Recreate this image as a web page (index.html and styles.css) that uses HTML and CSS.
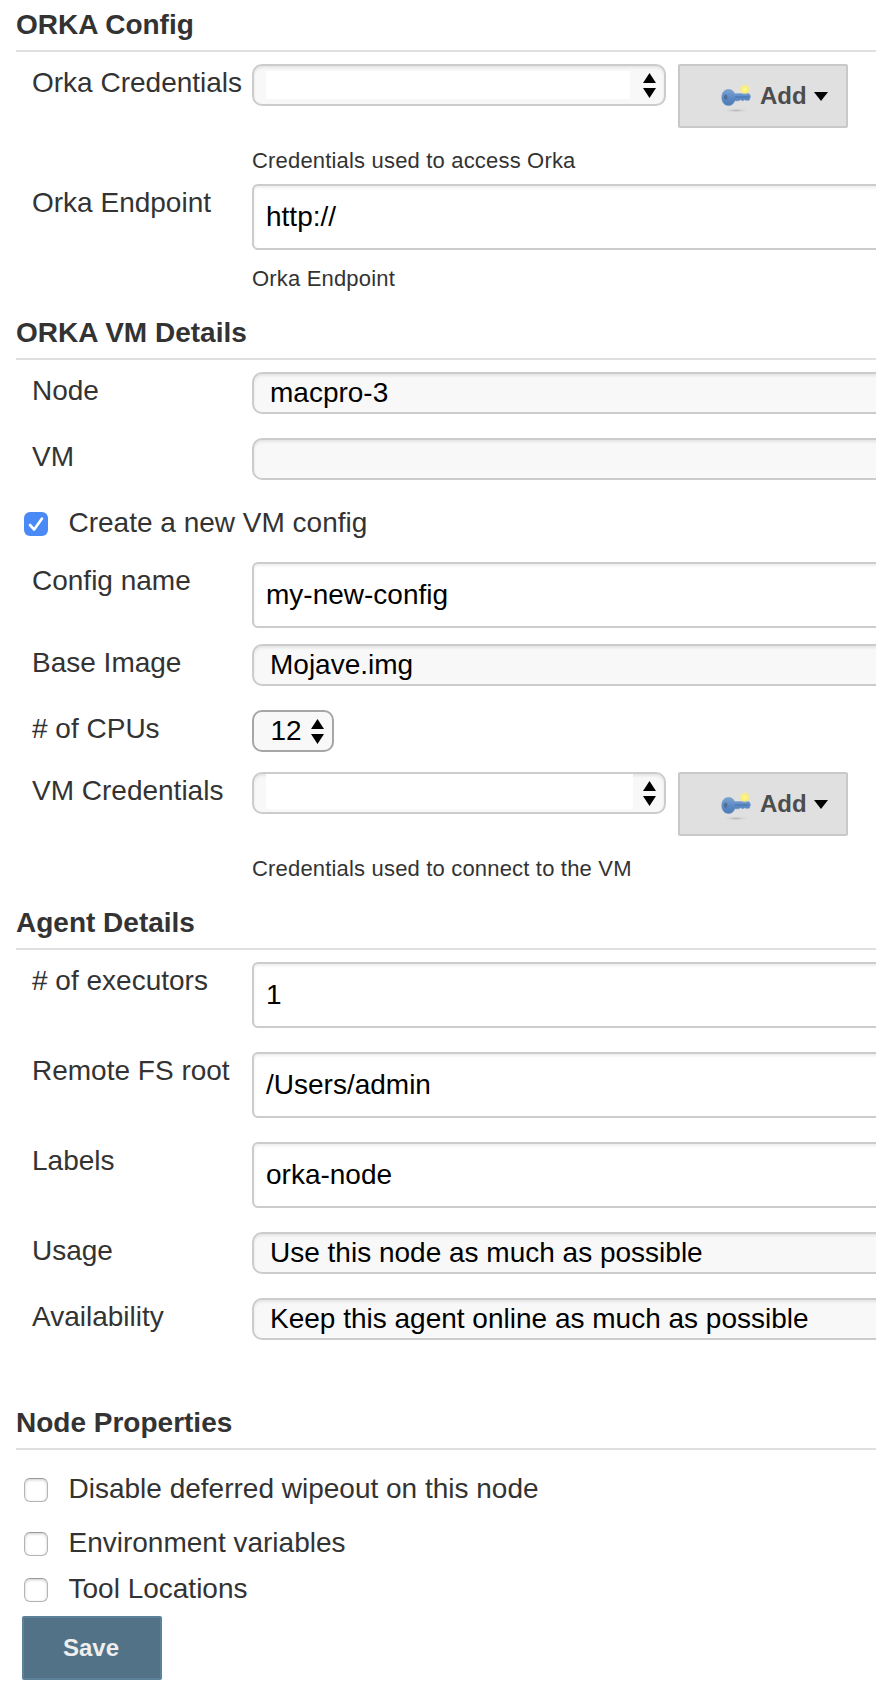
FILE: index.html
```html
<!DOCTYPE html>
<html lang="en">
<head>
<meta charset="utf-8">
<title>Orka node configuration</title>
<link rel="stylesheet" href="styles.css">
</head>
<body>
<svg width="0" height="0" class="defs" aria-hidden="true">
  <defs>
    <radialGradient id="glow"><stop offset="0" stop-color="#fffaa0"/><stop offset=".5" stop-color="#fdf06a"/><stop offset="1" stop-color="#f6ec8a" stop-opacity=".15"/></radialGradient>
    <radialGradient id="shade"><stop offset="0" stop-color="#b4b4b4"/><stop offset="1" stop-color="#dcdcdc" stop-opacity="0"/></radialGradient>
    <linearGradient id="steel" x1="0" y1="0" x2="0" y2="1"><stop offset="0" stop-color="#7ba3d3"/><stop offset=".5" stop-color="#5c8bc6"/><stop offset="1" stop-color="#4d7ab5"/></linearGradient>
    <symbol id="updown" viewBox="0 0 13 25"><path d="M6.5 0L13 10H0ZM6.5 25L13 15H0Z"/></symbol>
    <symbol id="key" viewBox="0 0 32 32">
      <ellipse cx="16" cy="30.5" rx="13" ry="2.4" fill="url(#shade)"/>
      <path d="M8.5 9.6C12 9.6 13.6 11.4 14.6 13.8L28.5 13.6Q30.4 14.3 30.4 17L29.2 20.2H26L24.4 19.8L22.8 20.8L20.6 19.8L18.4 20.8H14.8C13.6 24 11.6 25.5 8.6 25.5C4.4 25.5 1.8 22.2 1.8 17.5C1.8 12.8 4.4 9.6 8.5 9.6Z" fill="url(#steel)" stroke="#6a92c4" stroke-width=".6"/>
      <path d="M15 17H29" stroke="#4a76b0" stroke-width="1.2" fill="none"/>
      <ellipse cx="5.7" cy="17.2" rx="1.8" ry="2.8" fill="#526d91"/>
      <circle cx="24.8" cy="9.4" r="5.4" fill="url(#glow)"/>
    </symbol>
  </defs>
</svg>
<main class="form">
  <h2 class="heading">ORKA Config</h2>
  <div class="row row-credentials">
    <div class="label">Orka Credentials</div>
    <div class="field">
      <div class="controls">
        <div class="select select-credentials"><span class="blank"></span><svg class="arrows"><use href="#updown"/></svg></div>
        <div class="button button-add"><svg class="key"><use href="#key"/></svg><span>Add</span><span class="caret"></span></div>
      </div>
      <div class="help">Credentials used to access Orka</div>
    </div>
  </div>
  <div class="row row-endpoint">
    <div class="label">Orka Endpoint</div>
    <div class="field"><div class="input">http://</div><div class="help">Orka Endpoint</div></div>
  </div>

  <h2 class="heading">ORKA VM Details</h2>
  <div class="row"><div class="label">Node</div><div class="field"><div class="select wide">macpro-3</div></div></div>
  <div class="row"><div class="label">VM</div><div class="field"><div class="select wide"></div></div></div>
  <div class="check-row check-create">
    <span class="checkbox checked"><svg viewBox="0 0 24 24"><path d="M6 13L10.2 17.6L18 6.5"/></svg></span><span>Create a new VM config</span>
  </div>
  <div class="row row-name"><div class="label">Config name</div><div class="field"><div class="input">my-new-config</div></div></div>
  <div class="row"><div class="label">Base Image</div><div class="field"><div class="select wide">Mojave.img</div></div></div>
  <div class="row row-cpus"><div class="label"># of CPUs</div><div class="field"><div class="select select-cpus">12<svg class="arrows"><use href="#updown"/></svg></div></div></div>
  <div class="row row-vm-credentials">
    <div class="label">VM Credentials</div>
    <div class="field">
      <div class="controls">
        <div class="select select-credentials"><span class="blank blank-tall"></span><svg class="arrows"><use href="#updown"/></svg></div>
        <div class="button button-add"><svg class="key"><use href="#key"/></svg><span>Add</span><span class="caret"></span></div>
      </div>
      <div class="help">Credentials used to connect to the VM</div>
    </div>
  </div>

  <h2 class="heading">Agent Details</h2>
  <div class="row row-input"><div class="label"># of executors</div><div class="field"><div class="input">1</div></div></div>
  <div class="row row-input"><div class="label">Remote FS root</div><div class="field"><div class="input">/Users/admin</div></div></div>
  <div class="row row-input"><div class="label">Labels</div><div class="field"><div class="input">orka-node</div></div></div>
  <div class="row"><div class="label">Usage</div><div class="field"><div class="select wide">Use this node as much as possible</div></div></div>
  <div class="row row-availability"><div class="label">Availability</div><div class="field"><div class="select wide">Keep this agent online as much as possible</div></div></div>

  <h2 class="heading">Node Properties</h2>
  <div class="properties">
    <div class="check-row check-wipeout"><span class="checkbox"></span><span>Disable deferred wipeout on this node</span></div>
    <div class="check-row"><span class="checkbox"></span><span>Environment variables</span></div>
    <div class="check-row"><span class="checkbox"></span><span>Tool Locations</span></div>
  </div>
  <div class="button button-save">Save</div>
</main>
</body>
</html>
```
FILE: styles.css
```css
* { box-sizing: border-box; }
body {
  margin: 0;
  background: #fff;
  color: #333;
  font: 28px/32px "Liberation Sans", Arial, sans-serif;
  overflow: hidden;
}
.defs { position: absolute; }
.form { height: 1694px; white-space: nowrap; overflow: hidden; }
.heading {
  margin: 0 0 12px 16px;
  height: 52px;
  padding-top: 9px;
  border-bottom: 2px solid #e0e0e0;
  font-size: 28px;
  line-height: 32px;
  font-weight: bold;
}
.row { display: grid; grid-template-columns: 220px 1fr; padding-left: 32px; height: 66px; }
.row-credentials { height: 120px; }
.row-endpoint { height: 124px; }
.row-name { height: 82px; }
.row-cpus { height: 62px; }
.row-vm-credentials { height: 126px; }
.row-input { height: 90px; }
.row-availability { height: 100px; }
.label { padding-top: 3px; }
.controls { display: flex; align-items: flex-start; gap: 12px; }
.select {
  display: flex;
  align-items: flex-start;
  height: 42px;
  padding: 3px 8px 0 16px;
  border: 2px solid #ccc;
  border-radius: 10px;
  background: #f8f8f8;
  box-shadow: inset 0 2px 3px rgba(0, 0, 0, .08);
  color: #000;
}
/* full-width controls run past the right edge of the window */
.wide, .input { margin-right: -12px; }
.select-credentials { width: 414px; padding: 0 8px 0 12px; justify-content: space-between; }
.select-cpus { width: 82px; padding-left: 16.5px; border-color: #a6a6a6; justify-content: space-between; box-shadow: none; }
.arrows { width: 13px; height: 25px; margin-top: 6.5px; }
.select-cpus .arrows { margin-top: 4px; }
.blank { width: 364px; height: 28px; margin-top: 5px; background: #fff; }
.blank-tall { width: 367px; height: 35px; margin-top: 0; }
.input {
  height: 66px;
  padding: 15px 12px;
  border: 2px solid #ccc;
  border-radius: 6px;
  box-shadow: inset 0 2px 3px rgba(0, 0, 0, .07);
  color: #000;
}
.help { margin-top: 20px; font-size: 22px; line-height: 26px; letter-spacing: .18px; }
.row-endpoint .help { margin-top: 16px; }
.button {
  display: flex;
  align-items: center;
  height: 64px;
  border: 2px solid #c8c8c8;
  border-radius: 2px;
  font-size: 24px;
  font-weight: bold;
}
.button-add { width: 170px; padding-left: 40px; background: #e0e0e0; color: #4d4d4d; }
.key { width: 32px; height: 32px; margin-right: 8px; }
.caret { margin-left: 7px; border: 7.5px solid transparent; border-top: 9px solid #000; border-bottom: 0; }
.check-row { display: flex; height: 46px; padding: 3px 0 0 24px; gap: 20.5px; }
.check-create { height: 58px; }
.check-wipeout { height: 54px; }
.checkbox {
  width: 24px;
  height: 24px;
  margin-top: 5px;
  border: 1px solid #b4b4b4;
  border-top-color: #999;
  border-radius: 6px;
  background: #fff;
  box-shadow: inset 0 1px 3px rgba(0, 0, 0, .2);
}
.checked { border: 0; background: #4a8af6; box-shadow: none; }
.checked svg { display: block; width: 24px; height: 24px; fill: none; stroke: #fff; stroke-width: 2.6; stroke-linecap: round; stroke-linejoin: round; }
.properties { padding-top: 8px; }
.button-save {
  width: 140px;
  margin-left: 22px;
  padding-right: 2px;
  justify-content: center;
  border-color: #5b8299;
  background: #527387;
  color: #eee;
}
```
